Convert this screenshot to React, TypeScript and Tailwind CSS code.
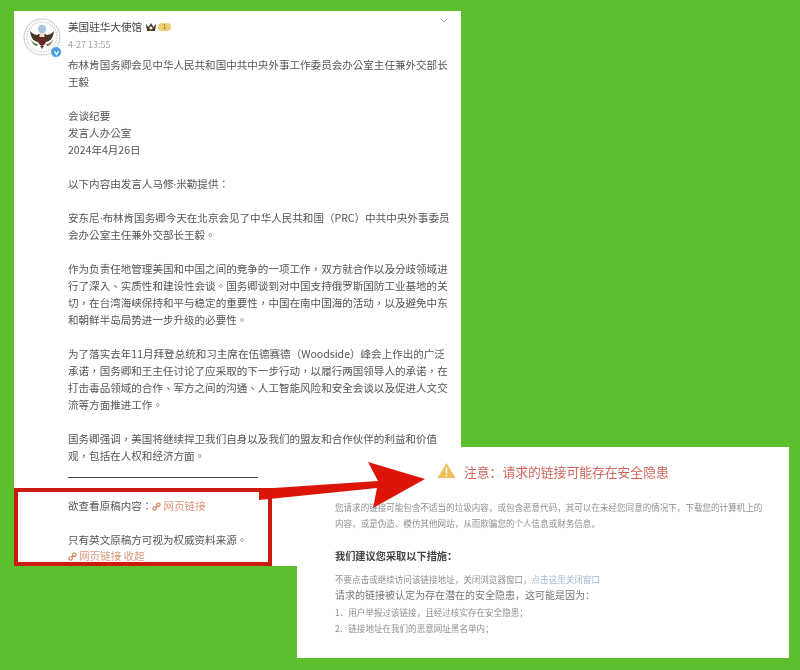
import type { ReactNode } from 'react';

const body = "font-['Noto_Sans_CJK_TC','Open_Sans',sans-serif]";

// 美国驻华大使馆 seal, drawn small
function Seal() {
  return (
    <svg viewBox="0 0 38 38" className="w-[38px] h-[38px]">
      <circle cx="19" cy="19" r="18" fill="#fff" stroke="#b4babf" strokeWidth="0.8" />
      <circle cx="19" cy="19" r="15" fill="none" stroke="#cfd3d6" strokeWidth="1.6" strokeDasharray="1.4 1.2" />
      <circle cx="19" cy="11" r="4.2" fill="#a9c6dc" />
      <path d="M7 13 C8 20 10 23 15 24 L15 17 C12 17 10 16 7 13Z" fill="#4a3424" />
      <path d="M31 13 C30 20 28 23 23 24 L23 17 C26 17 28 16 31 13Z" fill="#4a3424" />
      <path d="M15 16 H23 V23 C23 26 21 27 19 28 C17 27 15 26 15 23Z" fill="#6a2a24" />
      <path d="M16.5 15 H21.5 V19 H16.5Z" fill="#e8e2d0" />
      <path d="M8 21 C10 25 12 26 15 26 L14 28 C11 28 9 25 8 21Z" fill="#5d7a4a" />
      <path d="M30 21 C28 25 26 26 23 26 L24 28 C27 28 29 25 30 21Z" fill="#7a6a4a" />
      <path d="M17 28 L19 31 L21 28Z" fill="#55443a" />
    </svg>
  );
}

function LinkIcon() {
  return (
    <svg viewBox="0 0 12 12" className="w-[9px] h-[9px] inline-block mr-[2px] align-[-1px]" fill="none" stroke="#d9774f" strokeWidth="1.4">
      <path d="M5 7 L7 5" />
      <rect x="6.2" y="1.2" width="4.6" height="4.6" rx="2.2" />
      <rect x="1.2" y="6.2" width="4.6" height="4.6" rx="2.2" />
    </svg>
  );
}

// the name dot is narrow in the reference, the CJK face draws it full width
const Dot = () => <span className="font-['Open_Sans',sans-serif] leading-[0]">·</span>;

function Para({ lines }: { lines: ReactNode[] }) {
  return (
    <div className="mb-[17px]">
      {lines.map((line, index) => (
        <div key={index} className="whitespace-nowrap h-[17px]">{line}</div>
      ))}
    </div>
  );
}

export default function App() {
  return (
    <div className={`relative w-[800px] h-[670px] overflow-hidden bg-[#5cbf2d] pt-[11px] pl-[14px] ${body}`}>
      {/* Weibo post, zh-TW gives the centred punctuation of the reference */}
      <div lang="zh-TW" className="w-[447px] h-[555px] bg-white blur-[0.35px] relative">
        <div className="flex">
          <div className="relative ml-[9px] mt-[7px] w-[38px] h-[38px]">
            <Seal />
            <div className="absolute right-[-1px] bottom-[-2px] w-[12px] h-[12px] rounded-full bg-[#4a9fe0] border border-white flex items-center justify-center">
              <svg viewBox="0 0 10 10" className="w-[7px] h-[7px]" fill="none" stroke="#fff" strokeWidth="1.6">
                <path d="M2 3 L5 8 L8 3" />
              </svg>
            </div>
          </div>
          <div className="ml-[7px] pt-[7px] flex-1">
            <div className="flex items-center h-[17px] text-[10.6px] text-[#444]">
              <span>美国驻华大使馆</span>
              <svg viewBox="0 0 12 10" className="w-[12px] h-[10px] ml-[3px]">
                <path d="M1 2 L3.5 5 L6 1 L8.5 5 L11 2 L10 9 H2Z" fill="#4a3a22" />
                <circle cx="6" cy="6" r="1.6" fill="#fff" />
              </svg>
              <span className="ml-px w-[13px] h-[8px] rounded-full bg-[#f2cf72] text-[6px] leading-[8px] text-center text-[#8a6a20]">1</span>
            </div>
            <div className="text-[9px] leading-[13px] mt-[3px] text-[#a3a3a3]">4-27 13:55</div>
          </div>
          <svg viewBox="0 0 10 6" className="w-[8px] h-[5px] mt-[7px] mr-[13px]" fill="none" stroke="#777" strokeWidth="1">
            <path d="M1 1 L5 5 L9 1" />
          </svg>
        </div>
        <div className="ml-[54px] text-[10.55px] leading-[17px] text-[#555]">
          <Para lines={["布林肯国务卿会见中华人民共和国中共中央外事工作委员会办公室主任兼外交部长", "王毅"]} />
          <Para lines={["会谈纪要", "发言人办公室", "2024年4月26日"]} />
          <Para lines={[<>以下内容由发言人马修<Dot />米勒提供：</>]} />
          <Para lines={[<>安东尼<Dot />布林肯国务卿今天在北京会见了中华人民共和国（PRC）中共中央外事委员</>, "会办公室主任兼外交部长王毅。"]} />
          <Para lines={["作为负责任地管理美国和中国之间的竞争的一项工作，双方就合作以及分歧领域进", "行了深入、实质性和建设性会谈。国务卿谈到对中国支持俄罗斯国防工业基地的关", "切，在台湾海峡保持和平与稳定的重要性，中国在南中国海的活动，以及避免中东", "和朝鲜半岛局势进一步升级的必要性。"]} />
          <Para lines={["为了落实去年11月拜登总统和习主席在伍德赛德（Woodside）峰会上作出的广泛", "承诺，国务卿和王主任讨论了应采取的下一步行动，以履行两国领导人的承诺，在", "打击毒品领域的合作、军方之间的沟通、人工智能风险和安全会谈以及促进人文交", "流等方面推进工作。"]} />
          <Para lines={["国务卿强调，美国将继续捍卫我们自身以及我们的盟友和合作伙伴的利益和价值", "观，包括在人权和经济方面。"]} />
          <div className="w-[190px] h-px bg-[#444] mt-[-4px] mb-[19px]" />
          <div className="mb-[17px] h-[17px]">
            欲查看原稿内容：<LinkIcon /><span className="text-[#dd9a80]">网页链接</span>
          </div>
          <div className="h-[17px]">只有英文原稿方可视为权威资料来源。</div>
          <div className="text-[#dd9a80] leading-[16px]"><LinkIcon />网页链接 收起</div>
        </div>
      </div>

      {/* Warning page */}
      <div className="absolute left-[297px] top-[447px] w-[492px] h-[211px] bg-white blur-[0.35px] font-['Noto_Sans_CJK_SC',sans-serif]">
        <div className="flex items-center ml-[140px] mt-[13px] h-[24px]">
          <svg viewBox="0 0 20 18" className="w-[19px] h-[17px] mt-[-3px]">
            <path d="M10 1 L19.5 17 H0.5Z" fill="#eec05c" />
            <path d="M10 6 V12 M10 13.5 V15" stroke="#fff" strokeWidth="1.6" />
          </svg>
          <span className="ml-[8px] text-[12.8px] text-[#d0655c]">注意：请求的链接可能存在安全隐患</span>
        </div>
        <div className="ml-[38px] mt-[15px] text-[8.55px] leading-[16px] text-[#8f8f8f] whitespace-nowrap">
          <div>您请求的链接可能包含不适当的垃圾内容，或包含恶意代码，其可以在未经您同意的情况下，下载您的计算机上的</div>
          <div>内容，或是伪造、模仿其他网站，从而欺骗您的个人信息或财务信息。</div>
          <div className="mt-[17px] text-[10.2px] font-bold text-[#444]">我们建议您采取以下措施：</div>
          <div className="mt-[7px]">不要点击或继续访问该链接地址，关闭浏览器窗口，<span className="text-[#9fb8d4]">点击这里关闭窗口</span></div>
          <div className="text-[10px] leading-[15px] text-[#777]">请求的链接被认定为存在潜在的安全隐患，这可能是因为：</div>
          <div className="mt-[2px]">1、用户举报过该链接，且经过核实存在安全隐患；</div>
          <div>2、链接地址在我们的恶意网址黑名单内；</div>
        </div>
      </div>

      {/* Annotations */}
      <div className="absolute left-[14px] top-[488px] w-[258px] h-[78px] border-[4px] border-[#cc1a10]" />
      <svg viewBox="0 0 800 670" className="absolute inset-0 w-[800px] h-[670px] pointer-events-none">
        <path d="M259 489 L378 481 L368 462 L425 479 L373 508 L377 488 L259 500Z" fill="#dd1408" />
      </svg>
    </div>
  );
}
